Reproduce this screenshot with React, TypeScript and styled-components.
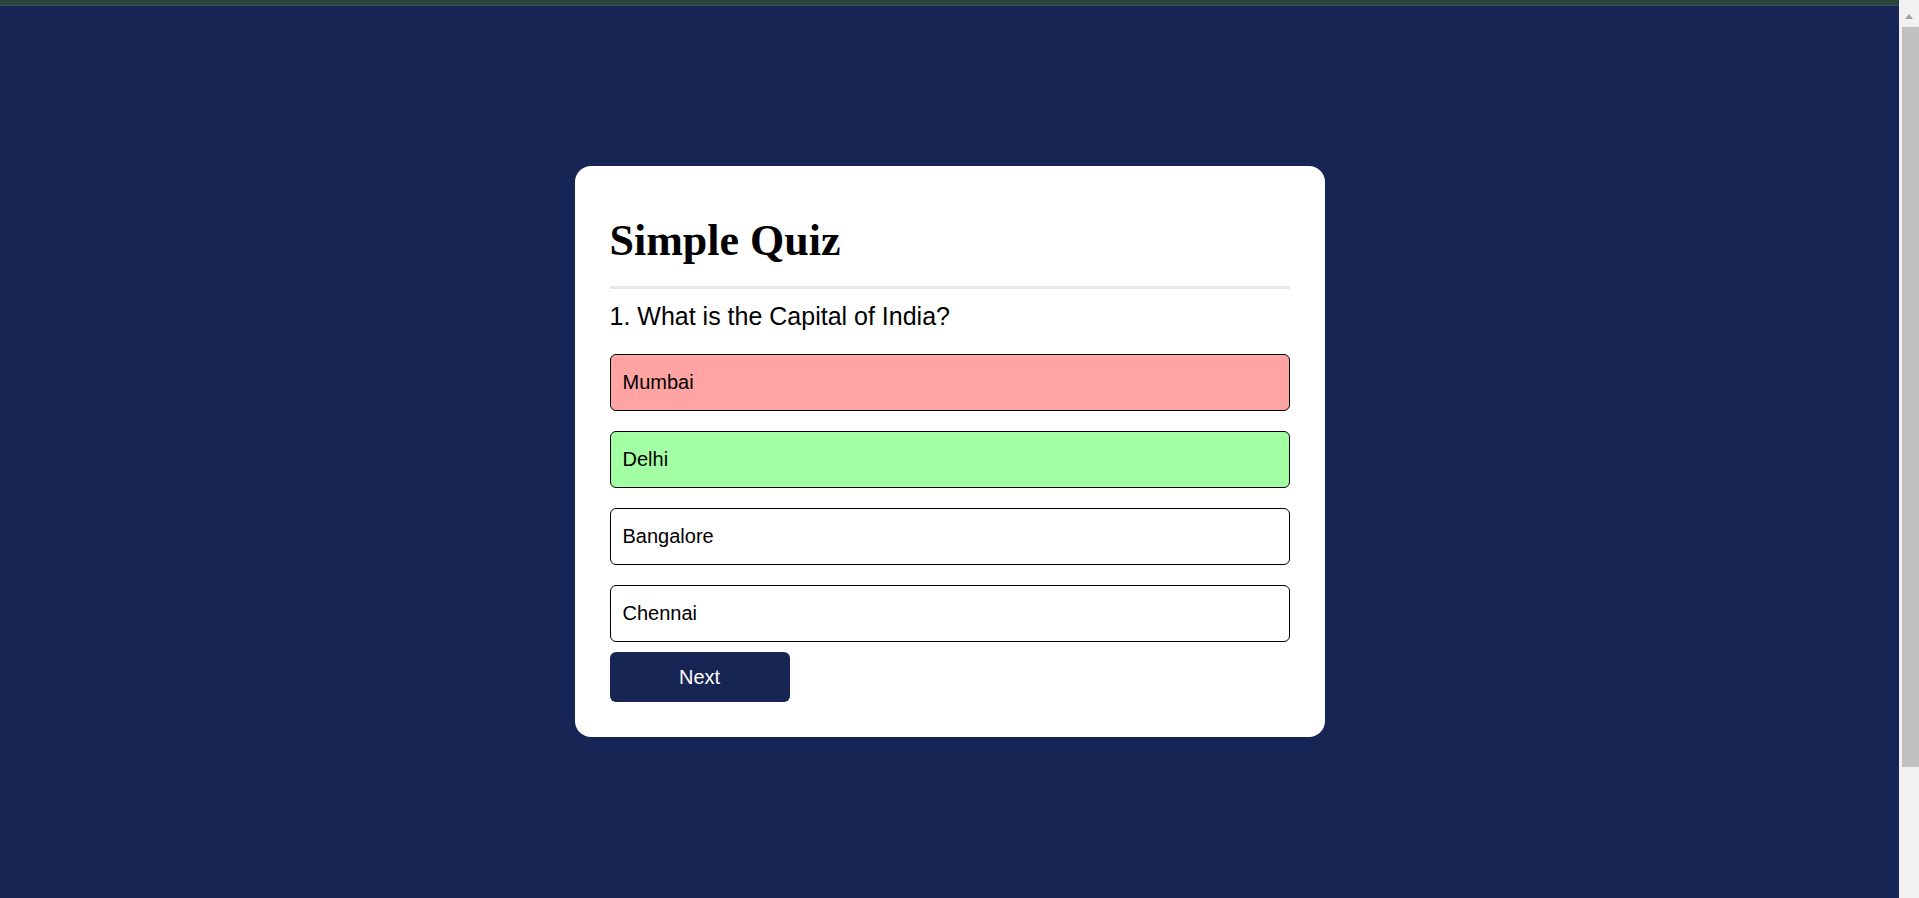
import styled, { createGlobalStyle } from "styled-components";

const GlobalStyle = createGlobalStyle`
  html, body {
    margin: 0;
    padding: 0;
    overflow: hidden;
  }
  body {
    background: #172554;
    font-family: "Liberation Sans", Arial, sans-serif;
  }
`;

const Shell = styled.div`
  display: flex;
  height: 100vh;
`;

const Main = styled.div`
  flex: 1;
  display: flex;
  flex-direction: column;
  min-width: 0;
`;

const TopStrip = styled.div`
  height: 5px;
  background: #2a453b;
  border-bottom: 1px solid #3a4a5a;
`;

const Page = styled.div`
  flex: 1;
  padding-top: 160px;
`;

// fake browser scrollbar seen in the screenshot
const ScrollTrack = styled.div`
  width: 20px;
  background: #f1f1f1;
  display: flex;
  flex-direction: column;
  align-items: center;
`;

const ScrollArrow = styled.div`
  margin-top: 14px;
  width: 0;
  height: 0;
  border-left: 4.5px solid transparent;
  border-right: 4.5px solid transparent;
  border-bottom: 5px solid #a3a3a3;
`;

const ScrollThumb = styled.div`
  margin-top: 8px;
  margin-left: 2px;
  width: 17px;
  height: 740px;
  background: #c1c1c1;
`;

const Card = styled.div`
  width: 680px;
  margin: 0 auto;
  padding: 35px;
  background: #fff;
  border-radius: 16px;
`;

const Title = styled.h1`
  margin: 15px 0 0;
  padding-bottom: 20px;
  border-bottom: 3px solid #e6e6ea;
  font-family: "Liberation Serif", "Times New Roman", serif;
  font-size: 44px;
  line-height: 50px;
  font-weight: 700;
  color: #000;
`;

const Question = styled.h2`
  margin: 12px 0 23px;
  font-size: 25px;
  line-height: 30px;
  font-weight: 400;
  color: #000;
`;

const Answers = styled.div`
  display: flex;
  flex-direction: column;
  gap: 20px;
`;

const Answer = styled.button<{ $state?: "correct" | "wrong" }>`
  display: flex;
  align-items: center;
  height: 57px;
  width: 100%;
  box-sizing: border-box;
  padding: 0 12px;
  border: 1px solid #000;
  border-radius: 6px;
  background: ${(p) =>
    p.$state === "wrong" ? "#ffa3a3" : p.$state === "correct" ? "#a3ffa3" : "#fff"};
  font-family: "Liberation Sans", Arial, sans-serif;
  font-size: 20px;
  color: #000;
  text-align: left;
  cursor: pointer;
`;

const NextButton = styled.button`
  display: block;
  margin-top: 10px;
  width: 180px;
  height: 50px;
  border: none;
  border-radius: 6px;
  background: #172554;
  color: #fff;
  font-family: "Liberation Sans", Arial, sans-serif;
  font-size: 20px;
  cursor: pointer;
`;

const answers: { text: string; state?: "correct" | "wrong" }[] = [
  { text: "Mumbai", state: "wrong" },
  { text: "Delhi", state: "correct" },
  { text: "Bangalore" },
  { text: "Chennai" },
];

export default function App() {
  return (
    <>
      <GlobalStyle />
      <Shell>
        <Main>
          <TopStrip />
          <Page>
            <Card>
              <Title>Simple Quiz</Title>
              <Question>1. What is the Capital of India?</Question>
              <Answers>
                {answers.map((a) => (
                  <Answer key={a.text} $state={a.state}>
                    {a.text}
                  </Answer>
                ))}
              </Answers>
              <NextButton>Next</NextButton>
            </Card>
          </Page>
        </Main>
        <ScrollTrack>
          <ScrollArrow />
          <ScrollThumb />
        </ScrollTrack>
      </Shell>
    </>
  );
}
